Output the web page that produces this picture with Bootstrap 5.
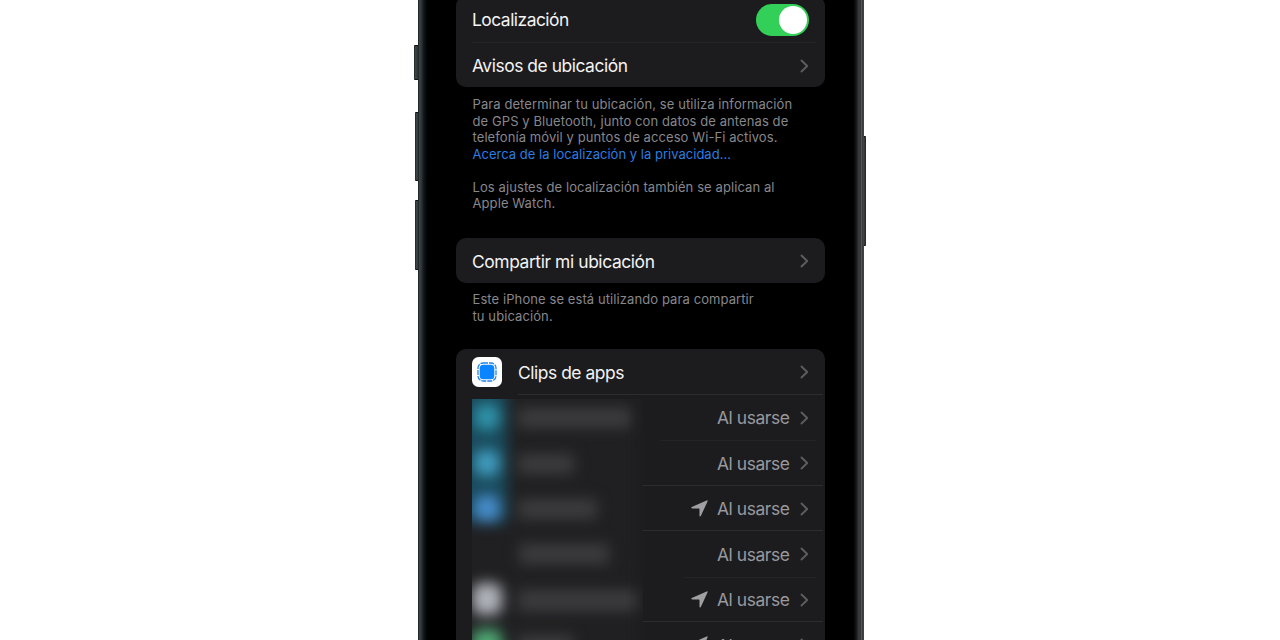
<!DOCTYPE html>
<html lang="es">
<head>
<meta charset="utf-8">
<meta name="viewport" content="width=device-width, initial-scale=1">
<title>Localización</title>
<link href="https://cdn.jsdelivr.net/npm/bootstrap@5.3.0/dist/css/bootstrap.min.css" rel="stylesheet">
<style>
  body { background: #fff; font-family: Inter, "Liberation Sans", sans-serif; height: 640px; }
  .phone { width: 446px; margin-left: 418px; height: 640px; padding: 0 39px 0 38px;
    background: linear-gradient(90deg, #151b1d 0, #3a4245 1.5px, #2c3336 3.5px, #14191c 5.5px, #020304 9px, #000 12px,
      #000 435px, #0b0b0c 437px, #25272a 439.5px, #3c3e41 441px, #333539 442.5px, #56585b 443.5px, #2a2b2d 445px, #5a5b5c 446px); }
  .side-key { width: 4px; background: linear-gradient(90deg, #1a1f20, #3c4344 1.5px, #2b3132); border: solid #0d1011; border-width: 1px 0; border-radius: 1px 0 0 1px; }
  .side-key.power { width: 3px; background: linear-gradient(90deg, #4d4d4d, #222); border-radius: 0 1px 1px 0; }
  .group { background: #1c1c1e; border-radius: 10px; }
  .group.first { margin-top: -4px; }
  .line { height: 45.5px; padding: 0 16px; color: #f3f3f4; font-size: 17.4px; letter-spacing: -.45px; white-space: nowrap; position: relative; }
  .line > span:not(.toggle) { padding-top: 2px; }
  .line.sep::after { content: ""; position: absolute; bottom: 0; right: 2px; height: 1px; left: var(--from, 16px); background: #2d2d2f; }
  .line.faint::after { right: 9px; bottom: -1px; background: #242426; }
  .note { font-size: 13px; line-height: 16.5px; letter-spacing: .09px; color: #87878c; padding: 9px 16px 0 16.5px; white-space: nowrap; }
  .note span { display: block; }
  .note .about { color: #2b7de1; letter-spacing: .02px; }
  .toggle { width: 53px; height: 32px; border-radius: 16px; background: #32d058; padding: 2px; }
  .knob { width: 28px; height: 28px; border-radius: 50%; background: #fff; }
  .chev { width: 9px; height: 14px; margin-top: 1px; fill: none; stroke: #5d5d61; stroke-width: 1.9; stroke-linecap: round; stroke-linejoin: round; }
  .use { color: #98989d; letter-spacing: -.4px; margin: 0 10.5px 0 9px; }
  .arrow { width: 17px; height: 17px; fill: #a0a0a4; }
  .redacted { left: 16px; top: 50px; width: 171px; height: 241px; background: #202022; overflow: hidden;
    -webkit-mask-image: linear-gradient(90deg, #000 90%, rgba(0,0,0,.5)); }
  .blob { filter: blur(7px); }
</style>
</head>
<body class="overflow-hidden position-relative">
  <div class="side-key position-absolute" style="left:414px;top:45px;height:35px"></div>
  <div class="side-key position-absolute" style="left:415px;top:112px;height:69px"></div>
  <div class="side-key position-absolute" style="left:415px;top:200px;height:70px"></div>
  <div class="side-key power position-absolute" style="left:863px;top:136px;height:110px"></div>

  <main class="phone overflow-hidden position-relative">
    <section class="group first">
      <div class="line sep faint d-flex align-items-center justify-content-between" style="padding-top:2px">
        <span style="padding:0;letter-spacing:-.5px">Localización</span>
        <span class="toggle d-flex justify-content-end align-items-center"><span class="knob"></span></span>
      </div>
      <div class="line d-flex align-items-center justify-content-between" style="padding-top:2px">
        <span>Avisos de ubicación</span>
        <svg class="chev" viewBox="0 0 9 14"><path d="M1.5 1.5 7.2 7 1.5 12.5"/></svg>
      </div>
    </section>
    <div class="note">
      <span>Para determinar tu ubicación, se utiliza información</span>
      <span>de GPS y Bluetooth, junto con datos de antenas de</span>
      <span>telefonía móvil y puntos de acceso Wi-Fi activos.</span>
      <span class="about">Acerca de la localización y la privacidad…</span>
      <span>&nbsp;</span>
      <span>Los ajustes de localización también se aplican al</span>
      <span>Apple Watch.</span>
    </div>

    <section class="group" style="margin-top:26px">
      <div class="line d-flex align-items-center justify-content-between">
        <span style="padding-top:3px;letter-spacing:-.4px">Compartir mi ubicación</span>
        <svg class="chev" viewBox="0 0 9 14"><path d="M1.5 1.5 7.2 7 1.5 12.5"/></svg>
      </div>
    </section>
    <div class="note" style="padding-top:8px">
      <span>Este iPhone se está utilizando para compartir</span>
      <span>tu ubicación.</span>
    </div>

    <section class="group position-relative" style="margin-top:25px">
      <div class="line sep d-flex align-items-center" style="--from:62px">
        <svg width="30" height="30" viewBox="0 0 30 30">
          <rect width="30" height="30" rx="6.5" fill="#fff"/>
          <rect x="7.700" y="7.700" width="14.600" height="14.600" rx="3.500" fill="#0a84ff"/>
          <rect x="6" y="6" width="18" height="18" rx="5" fill="none" stroke="#2583e8" stroke-width="1.3" stroke-dasharray="5 1"/>
        </svg>
        <span class="flex-grow-1" style="margin-left:16px">Clips de apps</span>
        <svg class="chev" viewBox="0 0 9 14"><path d="M1.5 1.5 7.2 7 1.5 12.5"/></svg>
      </div>
      <div class="line sep faint d-flex align-items-center justify-content-end" style="--from:204px">
        <span class="use">Al usarse</span><svg class="chev" viewBox="0 0 9 14"><path d="M1.5 1.5 7.2 7 1.5 12.5"/></svg>
      </div>
      <div class="line sep d-flex align-items-center justify-content-end" style="--from:187px">
        <span class="use">Al usarse</span><svg class="chev" viewBox="0 0 9 14"><path d="M1.5 1.5 7.2 7 1.5 12.5"/></svg>
      </div>
      <div class="line sep d-flex align-items-center justify-content-end" style="--from:187px">
        <svg class="arrow" viewBox="0 0 17 17"><path d="M.8 7.1 15.6.4Q17 0 16.5 1.5L9.8 16.1Q9 17 8.5 15.9V9.2Q8.500 8.500 7.800 8.500H1Q-.3 7.900.8 7.100Z"/></svg>
        <span class="use">Al usarse</span><svg class="chev" viewBox="0 0 9 14"><path d="M1.5 1.5 7.2 7 1.5 12.5"/></svg>
      </div>
      <div class="line sep faint d-flex align-items-center justify-content-end" style="--from:228px">
        <span class="use">Al usarse</span><svg class="chev" viewBox="0 0 9 14"><path d="M1.5 1.5 7.2 7 1.5 12.5"/></svg>
      </div>
      <div class="line sep d-flex align-items-center justify-content-end" style="--from:187px">
        <svg class="arrow" viewBox="0 0 17 17"><path d="M.8 7.1 15.6.4Q17 0 16.5 1.5L9.8 16.1Q9 17 8.5 15.9V9.2Q8.500 8.500 7.800 8.500H1Q-.3 7.900.8 7.100Z"/></svg>
        <span class="use">Al usarse</span><svg class="chev" viewBox="0 0 9 14"><path d="M1.5 1.5 7.2 7 1.5 12.5"/></svg>
      </div>
      <div class="line d-flex align-items-center justify-content-end">
        <svg class="arrow" viewBox="0 0 17 17"><path d="M.8 7.1 15.6.4Q17 0 16.5 1.5L9.8 16.1Q9 17 8.5 15.9V9.2Q8.500 8.500 7.800 8.500H1Q-.3 7.900.8 7.100Z"/></svg>
        <span class="use">Al usarse</span><svg class="chev" viewBox="0 0 9 14"><path d="M1.5 1.5 7.2 7 1.5 12.5"/></svg>
      </div>
      <svg class="redacted position-absolute" viewBox="0 0 171 241">
        <g class="blob">
          <rect x="-12" y="-14" width="47" height="138" fill="#194a5c"/>
          <rect x="2" y="5" width="26" height="26" rx="9" fill="#2f92a8"/>
          <rect x="2" y="51" width="26" height="26" rx="9" fill="#409cbe"/>
          <rect x="2" y="96" width="26" height="27" rx="9" fill="#478ccb"/>
          <rect x="0" y="184" width="30" height="32" rx="9" fill="#b0b2ba"/>
          <rect x="0" y="230" width="30" height="30" rx="8" fill="#4fa874"/>
          <g fill="#3c3c3e">
            <rect x="46" y="9" width="114" height="20"/>
            <rect x="46" y="55" width="56" height="20"/>
            <rect x="46" y="100" width="79" height="20"/>
            <rect x="47" y="145" width="90" height="20"/>
            <rect x="46" y="191" width="123" height="21"/>
            <rect x="46" y="236" width="55" height="20"/>
          </g>
        </g>
      </svg>
    </section>
  </main>
<script src="https://cdn.jsdelivr.net/npm/bootstrap@5.3.0/dist/js/bootstrap.bundle.min.js"></script>
</body>
</html>
